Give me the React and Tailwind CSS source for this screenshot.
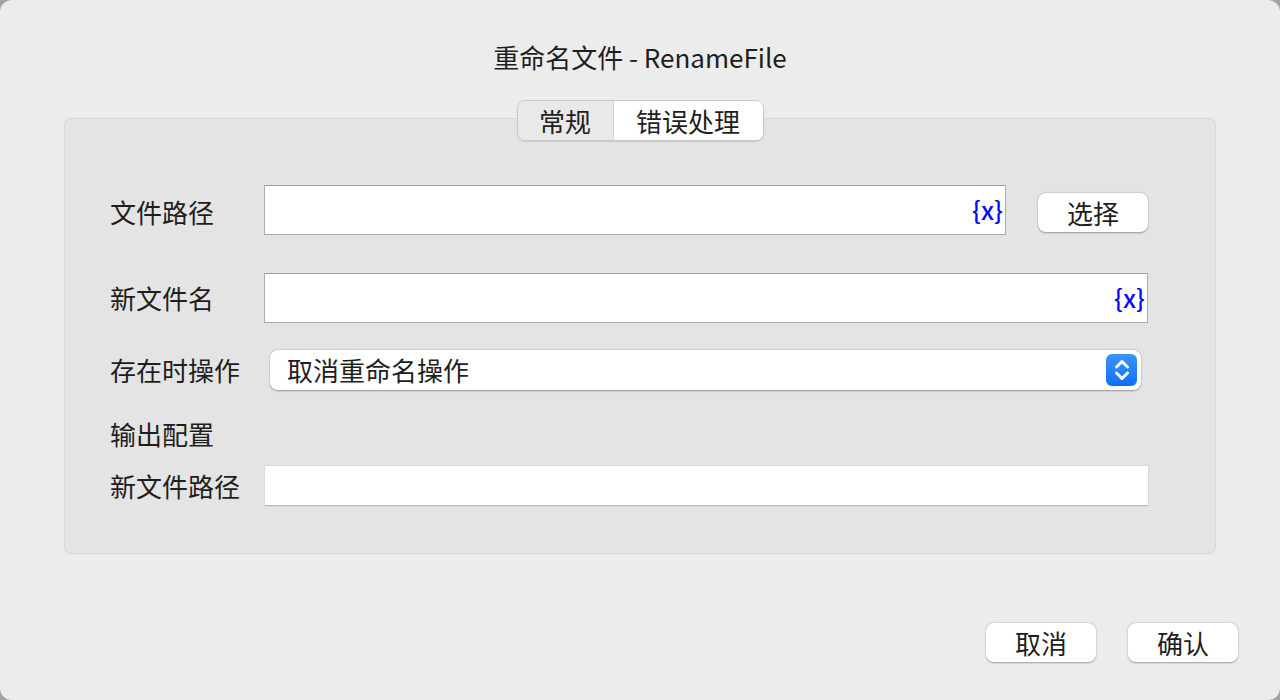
const font = { fontFamily: '"Noto Sans CJK SC", "Noto Sans", sans-serif' };

export default function App() {
  return (
    <div className="w-[1280px] h-[700px] bg-[#a3a3a3]" style={font}>
      <div className="w-full h-full rounded-[12px] bg-[#ececec] flex flex-col text-[#1e1e1e]">
        <div className="pt-[44px] text-center text-[26px] leading-[26px]">重命名文件 - RenameFile</div>

        <div className="mt-[30px] flex justify-center relative z-10">
          <div className="flex h-[41px] rounded-[8px] overflow-hidden border border-[#c9c9c9] shadow-[0_1px_1px_rgba(0,0,0,0.12)] text-[26px] leading-none">
            <div className="w-[96px] flex items-center justify-center bg-[#e9e9e9] border-r border-[#d4d4d4]">常规</div>
            <div className="w-[149px] flex items-center justify-center bg-white">错误处理</div>
          </div>
        </div>

        <div className="mx-[64px] -mt-[23px] rounded-[7px] border border-[#d9d9d9] bg-[#e4e4e4] pt-[66px] pb-[47px] pl-[45px] text-[26px] leading-none">
          <div className="flex">
            <div className="w-[154px] h-[50px] flex items-center pt-[3px]">文件路径</div>
            <TextField width="w-[742px]" />
            <Button className="ml-[32px] mt-[8px]">选择</Button>
          </div>

          <div className="flex mt-[38px]">
            <div className="w-[154px] h-[50px] flex items-center">新文件名</div>
            <TextField width="w-[884px]" />
          </div>

          <div className="flex mt-[27px]">
            <div className="w-[160px] h-[40px] flex items-center">存在时操作</div>
            <div className="w-[871px] h-[40px] rounded-[8px] bg-white shadow-[0_0.5px_2px_rgba(0,0,0,0.35)] flex items-center pl-[17px] pr-[4px]">
              <span className="flex-1">取消重命名操作</span>
              <div className="w-[31px] h-[32px] rounded-[6px] bg-gradient-to-b from-[#3b95fd] to-[#0a6ff5] flex items-center justify-center">
                <svg width="18" height="24" viewBox="0 0 18 24" fill="none" stroke="white" strokeWidth="3" strokeLinecap="round" strokeLinejoin="round">
                  <path d="M3.5 9 L9 3.5 L14.5 9" />
                  <path d="M3.5 15 L9 20.5 L14.5 15" />
                </svg>
              </div>
            </div>
          </div>

          <div className="mt-[31px] h-[26px] flex items-center">输出配置</div>

          <div className="flex mt-[19px]">
            <div className="w-[155px] h-[40px] flex items-center">新文件路径</div>
            <div className="w-[883px] h-[40px] bg-white border-b border-[#b8b8b8] shadow-[0_0_1px_rgba(0,0,0,0.25)]" />
          </div>
        </div>

        <div className="mt-[69px] flex justify-end gap-[32px] pr-[42px]">
          <Button>取消</Button>
          <Button>确认</Button>
        </div>
      </div>
    </div>
  );
}

function TextField({ width }) {
  return (
    <div className={`${width} h-[50px] bg-white border border-[#acacac] border-t-[#9d9d9d] flex items-center justify-end pr-[2px]`}>
      <span className="text-[25px] leading-none font-medium text-[#0a0aff] pb-[2px]">{'{x}'}</span>
    </div>
  );
}

function Button({ children, className = '' }) {
  return (
    <div className={`w-[110px] h-[39px] rounded-[8px] bg-white shadow-[0_0.5px_2px_rgba(0,0,0,0.35)] flex items-center justify-center text-[26px] leading-none ${className}`}>
      {children}
    </div>
  );
}
